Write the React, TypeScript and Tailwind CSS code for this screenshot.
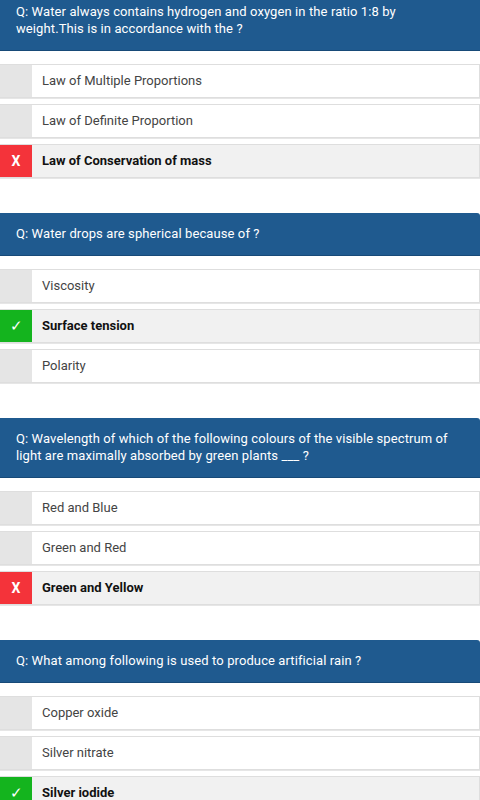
import { Fragment } from 'react';

type Option = { text: string; mark?: 'wrong' | 'right' };

interface Question {
  q: string;
  options: Option[];
}

const questions: Question[] = [
  {
    q: 'Q: Water always contains hydrogen and oxygen in the ratio 1:8 by weight.This is in accordance with the ?',
    options: [
      { text: 'Law of Multiple Proportions' },
      { text: 'Law of Definite Proportion' },
      { text: 'Law of Conservation of mass', mark: 'wrong' },
    ],
  },
  {
    q: 'Q: Water drops are spherical because of ?',
    options: [
      { text: 'Viscosity' },
      { text: 'Surface tension', mark: 'right' },
      { text: 'Polarity' },
    ],
  },
  {
    q: 'Q: Wavelength of which of the following colours of the visible spectrum of light are maximally absorbed by green plants ___ ?',
    options: [
      { text: 'Red and Blue' },
      { text: 'Green and Red' },
      { text: 'Green and Yellow', mark: 'wrong' },
    ],
  },
  {
    q: 'Q: What among following is used to produce artificial rain ?',
    options: [
      { text: 'Copper oxide' },
      { text: 'Silver nitrate' },
      { text: 'Silver iodide', mark: 'right' },
    ],
  },
];

function OptionRow({ option }: { option: Option }) {
  const picked = !!option.mark;
  return (
    <div
      className={`flex h-[34px] border border-[#dedede] border-l-0 shadow-[0_1px_0_#e6e6e6] ${
        picked ? 'bg-[#f1f1f1]' : 'bg-white'
      }`}
    >
      {option.mark === 'wrong' ? (
        <div className="w-[32px] shrink-0 bg-[#f4333a] text-white font-bold text-[14px] flex items-center justify-center">
          X
        </div>
      ) : option.mark === 'right' ? (
        <div className="w-[32px] shrink-0 bg-[#14b41e] text-white text-[15px] flex items-center justify-center">
          ✓
        </div>
      ) : (
        <div className="w-[32px] shrink-0 bg-[#e5e5e5]" />
      )}
      <div
        className={`flex items-center pl-[10px] text-[13px] ${
          picked ? 'font-bold text-[#111]' : 'text-[#444]'
        }`}
      >
        {option.text}
      </div>
    </div>
  );
}

export default function App() {
  return (
    <div className="w-[480px] h-[800px] overflow-hidden bg-white font-['Roboto',sans-serif]">
      <div className="-mt-[9px]">
        {questions.map((item, i) => (
          <Fragment key={i}>
            <div className="bg-[#1f5a8f] rounded-tr-[3px] text-white text-[13px] tracking-[0.1px] leading-[17px] pl-4 pr-6 pt-[12px] pb-[13px] border-b border-[#174a78]">
              {item.q}
            </div>
            <div className="flex flex-col gap-[6px] pt-[13px] pb-[35px]">
              {item.options.map((o, j) => (
                <OptionRow key={j} option={o} />
              ))}
            </div>
          </Fragment>
        ))}
      </div>
    </div>
  );
}
